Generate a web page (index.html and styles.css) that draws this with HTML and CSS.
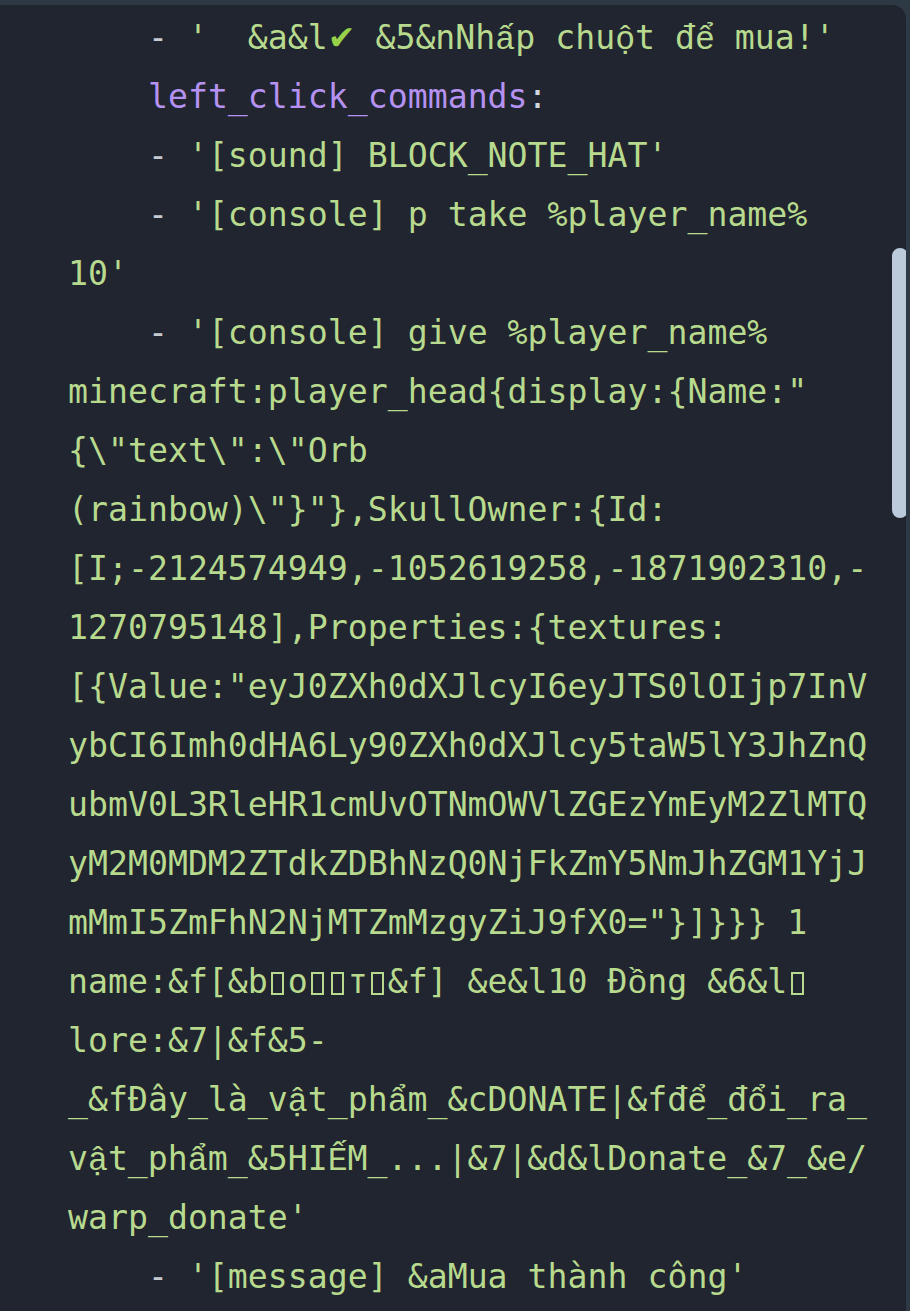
FILE: index.html
```html
<!DOCTYPE html>
<html lang="vi">

<head>
    <meta charset="UTF-8">
    <meta name="viewport" content="width=device-width, initial-scale=1.0">
    <title>left_click_commands</title>
    <link rel="stylesheet" href="styles.css">
</head>

<body>
    <div class="frame">
        <div class="code">
            <div class="ln">    <span class="dash">-</span> '  &amp;a&amp;l<span class="tick">✔</span> &amp;5&amp;nNh<span class="vi">ấ</span>p chu<span class="vi">ộ</span>t đ<span class="vi">ể</span> mua!'</div>
            <div class="ln">    <span class="key">left_click_commands</span><span class="colon">:</span></div>
            <div class="ln">    <span class="dash">-</span> '[sound] BLOCK_NOTE_HAT'</div>
            <div class="ln">    <span class="dash">-</span> '[console] p take %player_name%</div>
            <div class="ln">10'</div>
            <div class="ln">    <span class="dash">-</span> '[console] give %player_name%</div>
            <div class="ln">minecraft:player_head{display:{Name:"</div>
            <div class="ln">{\"text\":\"Orb</div>
            <div class="ln">(rainbow)\"}"},SkullOwner:{Id:</div>
            <div class="ln">[I;-2124574949,-1052619258,-1871902310,-</div>
            <div class="ln">1270795148],Properties:{textures:</div>
            <div class="ln">[{Value:"eyJ0ZXh0dXJlcyI6eyJTS0lOIjp7InV</div>
            <div class="ln">ybCI6Imh0dHA6Ly90ZXh0dXJlcy5taW5lY3JhZnQ</div>
            <div class="ln">ubmV0L3RleHR1cmUvOTNmOWVlZGEzYmEyM2ZlMTQ</div>
            <div class="ln">yM2M0MDM2ZTdkZDBhNzQ0NjFkZmY5NmJhZGM1YjJ</div>
            <div class="ln">mMmI5ZmFhN2NjMTZmMzgyZiJ9fX0="}]}}} 1</div>
            <div class="ln">name:&amp;f[&amp;b<span class="tofu"><i></i></span>o<span class="tofu"><i></i></span><span class="tofu"><i></i></span>т<span class="tofu"><i></i></span>&amp;f] &amp;e&amp;l10 Đ<span class="vi">ồ</span>ng &amp;6&amp;l<span class="tofu"><i></i></span></div>
            <div class="ln">lore:&amp;7|&amp;f&amp;5-</div>
            <div class="ln">_&amp;fĐây_là_v<span class="vi">ậ</span>t_ph<span class="vi">ẩ</span>m_&amp;cDONATE|&amp;fđ<span class="vi">ể</span>_đ<span class="vi">ổ</span>i_ra_</div>
            <div class="ln">v<span class="vi">ậ</span>t_ph<span class="vi">ẩ</span>m_&amp;5HI<span class="vi">Ế</span>M_...|&amp;7|&amp;d&amp;lDonate_&amp;7_&amp;e/</div>
            <div class="ln">warp_donate'</div>
            <div class="ln">    <span class="dash">-</span> '[message] &amp;aMua thành công'</div>

            <div class="thumb"></div>
        </div>
    </div>
</body>

</html>
```

FILE: styles.css
```css
body {
    margin: 0;
    background: #2e3946;
}

.frame {
    padding: 5px 4px 0 0;
}

/* code block */
.code {
    position: relative;
    height: 1306px;
    overflow: hidden;
    box-sizing: border-box;
    padding: 3px 0 0 68px;
    background: #21252f;
    border-top-right-radius: 14px;
    font-family: "DejaVu Sans Mono", "Liberation Mono", monospace;
    font-size: 33.2px;
    color: #b8da8e;
}

.ln {
    height: 59px;
    line-height: 59px;
    white-space: pre;
}

.dash {
    color: #c6cad2;
}

.key {
    color: #b592f2;
}

.colon {
    color: #d2d6de;
}

/* vietnamese letters that the mono font lacks */
.vi {
    display: inline-block;
    width: 1ch;
    text-align: center;
    font-family: "Liberation Mono", monospace;
}

.tick {
    font-family: "DejaVu Sans", sans-serif;
    font-size: 33px;
    color: #97d14a;
}

/* missing glyph boxes */
.tofu {
    display: inline-block;
    width: 1ch;
    text-align: center;
}

.tofu i {
    display: inline-block;
    box-sizing: border-box;
    width: 13px;
    height: 23px;
    border: 2px solid currentColor;
    vertical-align: -2px;
}

/* scrollbar */
.thumb {
    position: absolute;
    top: 243px;
    right: -2px;
    width: 16px;
    height: 270px;
    border-radius: 8px;
    background: #bccbdb;
}
```
